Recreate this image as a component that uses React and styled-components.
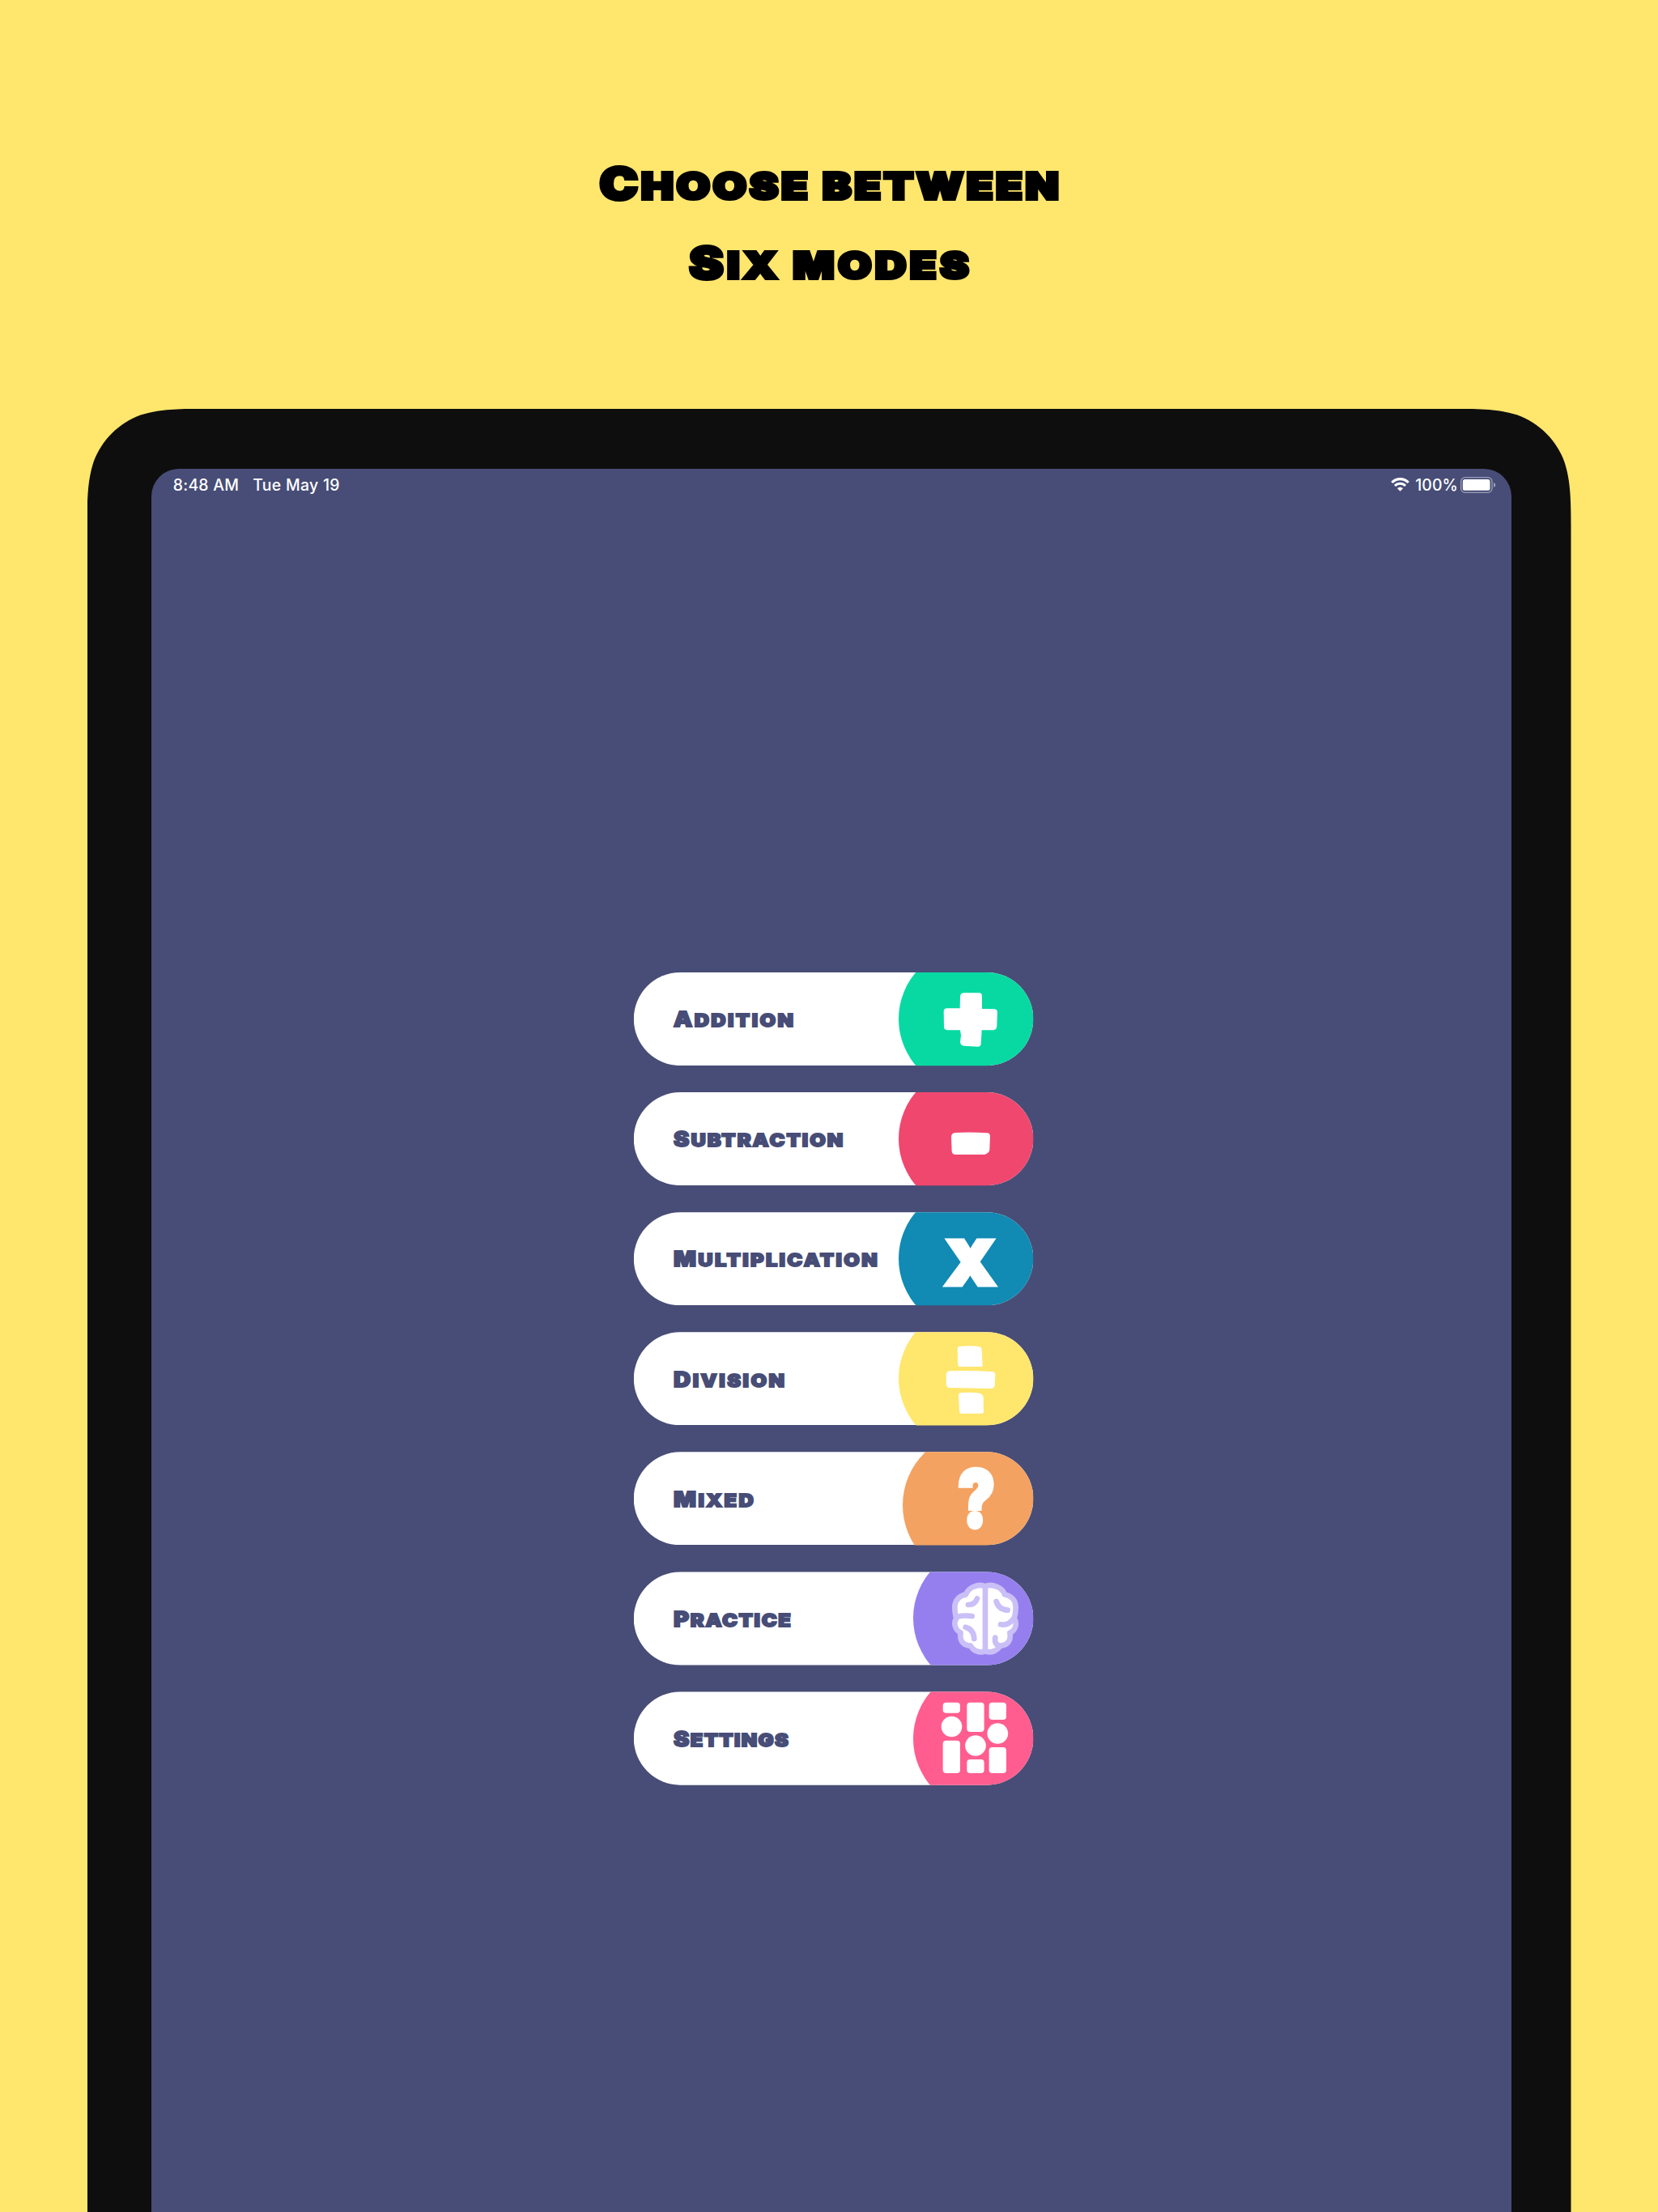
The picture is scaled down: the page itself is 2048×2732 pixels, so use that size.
import React from "react";
import styled, { createGlobalStyle } from "styled-components";

const GlobalStyle = createGlobalStyle`
  *, *::before, *::after { box-sizing: border-box; }
  html, body { margin: 0; padding: 0; background: #ffe66d; }
`;

const displayFont = `"Inter", "Liberation Sans", sans-serif`;

const Poster = styled.main`
  width: 2048px;
  height: 2732px;
  overflow: hidden;
  display: flex;
  flex-direction: column;
  align-items: center;
  background: #ffe66d;
  font-family: ${displayFont};
`;

const Headline = styled.h1`
  margin: 0;
  height: 504.7px;
  flex: none;
  padding-top: 181px;
  display: flex;
  flex-direction: column;
  align-items: center;
  color: #000;
`;

const HeadlineLine = styled.span`
  display: block;
  height: 98px;
  font-size: 45.5px;
  line-height: 98px;
  font-weight: 900;
  text-transform: uppercase;
  white-space: nowrap;
  letter-spacing: ${(p) => p.$tracking}px;
  margin-right: ${(p) => -p.$tracking}px;
  transform: scaleX(1.18);
  -webkit-text-stroke: 4px currentColor;
  &::first-letter { font-size: 54px; line-height: 1; }
`;

const Bezel = styled.section`
  width: 1833px;
  height: 2300px;
  flex: none;
  padding: 74px 73.7px 0 79.3px;
  background: #0e0e0e;
  clip-path: path("M0 2300 V160.5 C0 114.3 0 91.2 7.9 66.3 C17.8 39.1 39.1 17.8 66.3 7.9 C91.2 0 114.3 0 160.5 0 H1672.5 C1718.7 0 1741.8 0 1766.7 7.9 C1793.9 17.8 1815.2 39.1 1825.1 66.3 C1833 91.2 1833 114.3 1833 160.5 V2300 Z");
`;

const Screen = styled.div`
  height: 100%;
  border-radius: 34px 34px 0 0;
  background: #474d76;
  display: flex;
  flex-direction: column;
`;

const StatusBar = styled.header`
  height: 40px;
  flex: none;
  padding: 0 19px 0 27px;
  display: flex;
  align-items: center;
  color: #fff;
  font-size: 19.4px;
  font-weight: 450;
  line-height: 40px;
  white-space: nowrap;
`;

const Clock = styled.span`
  width: 98.5px;
  letter-spacing: 0.25px;
`;

const Today = styled.span`
  letter-spacing: 0.3px;
`;

const Indicators = styled.div`
  margin-left: auto;
  display: flex;
  align-items: center;
  svg { display: block; }
`;

const Charge = styled.span`
  width: 55.5px;
  margin-left: 7px;
`;

const Menu = styled.nav`
  padding: 582.3px 0 0 596px;
  display: flex;
  flex-direction: column;
  gap: 32.9px;
`;

const Pill = styled.button`
  appearance: none;
  border: 0;
  margin: 0;
  width: 493.6px;
  height: 115.2px;
  padding: 0 0 0 49.5px;
  clip-path: inset(0 round 57.6px);
  background: #fff;
  color: #474d76;
  font-family: inherit;
  display: flex;
  align-items: center;
  text-align: left;
`;

const Label = styled.span`
  display: block;
  flex: none;
  height: 40px;
  line-height: 40px;
  margin-top: 3.4px;
  font-size: 21.8px;
  font-weight: 900;
  text-transform: uppercase;
  white-space: nowrap;
  letter-spacing: ${(p) => p.$tracking}px;
  transform: scaleX(1.16);
  transform-origin: left center;
  -webkit-text-stroke: 1.8px currentColor;
  &::first-letter { font-size: 25.2px; line-height: 1; }
`;

const Badge = styled.span`
  flex: none;
  width: ${(p) => p.$size}px;
  height: ${(p) => p.$size}px;
  margin-left: auto;
  margin-right: ${(p) => -p.$bleed}px;
  margin-top: ${(p) => p.$drop || 0}px;
  border-radius: 50%;
  background: ${(p) => p.$color};
  color: #fff;
  display: flex;
  align-items: center;
  justify-content: center;
`;

const Icon = styled.svg`
  display: block;
  width: 96px;
  height: 96px;
  margin-left: 1px;
  overflow: visible;
`;

const Glyph = styled.span`
  display: block;
  font-size: ${(p) => p.$size}px;
  line-height: 1;
  font-weight: 900;
  -webkit-text-stroke: ${(p) => p.$stroke}px currentColor;
  transform: translateY(${(p) => p.$shift}px) scaleX(${(p) => p.$stretch});
`;

const PlusIcon = () => (
  <Icon viewBox="1143 62 288 288" fill="currentColor">
    <path d="M1260 108 L1318 108 Q1329 109 1329 119 L1329 167 L1376 168 Q1386 170 1386 180 L1384 234 Q1382 245 1371 246 L1328 246 L1325 298 Q1323 307 1314 307 L1261 304 Q1249 302 1248 290 L1251 265 L1248 246 L1200 246 Q1188 245 1188 234 L1187 176 Q1188 165 1199 165 L1247 165 L1248 122 Q1249 109 1260 108 Z" />
  </Icon>
);

const MinusIcon = () => (
  <Icon viewBox="1143 506 288 288" fill="currentColor">
    <path d="M1229 626 Q1287 623 1348 627 Q1359 628 1359 639 L1357 690 Q1355 703 1338 707 L1229 707 Q1218 706 1217 695 L1215 641 Q1216 627 1229 626 Z" />
  </Icon>
);

const DivideIcon = () => (
  <Icon viewBox="1143 525 288 288" fill="currentColor">
    <path d="M1245 549 Q1284 545 1318 549 Q1327 551 1328 561 L1331 617 Q1331 624 1325 624 L1246 624 Q1240 624 1240 617 L1238 557 Q1238 550 1245 549 Z" />
    <path d="M1208 640 Q1285 638 1367 642 Q1378 644 1378 654 L1376 694 Q1374 704 1363 705 L1208 702 Q1197 701 1196 690 L1196 653 Q1197 642 1208 640 Z" />
    <path d="M1249 721 Q1284 717 1320 722 Q1333 726 1334 738 L1335 791 Q1335 798 1328 797 L1254 798 Q1245 797 1245 789 L1242 729 Q1242 722 1249 721 Z" />
  </Icon>
);

const BrainIcon = () => (
  <Icon viewBox="1197 513 288 288">
    <path
      fill="#fff"
      stroke="#cabff7"
      strokeWidth="20"
      strokeLinejoin="round"
      d="M1341 538 C1330 532 1312 533 1296 540 C1282 546 1273 558 1269 568 C1246 571 1229 589 1228 612 C1228 630 1229 642 1234 656 C1225 670 1227 684 1234 696 C1240 705 1245 708 1250 710 C1245 738 1258 757 1287 758 C1296 776 1320 788 1341 777 C1362 788 1386 776 1396 758 C1424 757 1438 738 1432 710 C1438 708 1444 704 1449 696 C1456 684 1457 670 1448 656 C1455 638 1454 630 1454 612 C1453 589 1436 573 1413 568 C1409 556 1400 546 1386 540 C1370 533 1352 532 1341 538 Z"
    />
    <g fill="none" stroke="#cabff7" strokeWidth="20" strokeLinecap="round">
      <path d="M1341 540 V777" />
      <path d="M1278 606 Q1303 606 1311 583" />
      <path d="M1236 650 Q1262 644 1292 648" />
      <path d="M1268 689 Q1298 697 1300 732" />
      <path d="M1382 594 Q1390 623 1424 626" />
      <path d="M1398 679 Q1426 684 1444 660" />
      <path d="M1378 728 Q1374 752 1393 759" />
    </g>
  </Icon>
);

const MixerIcon = () => (
  <Icon viewBox="207 507 288 288" fill="currentColor">
    <rect x="194" y="518" width="64" height="39" rx="12" />
    <circle cx="226.500" cy="607.500" r="38.500" />
    <rect x="194" y="659" width="64" height="121" rx="12" />
    <rect x="283" y="518" width="64" height="109" rx="12" />
    <circle cx="315" cy="678" r="38.500" />
    <rect x="283" y="729" width="64" height="51" rx="12" />
    <rect x="365" y="518" width="64" height="64" rx="12" />
    <circle cx="397" cy="633" r="38.500" />
    <rect x="365" y="684" width="64" height="96" rx="12" />
  </Icon>
);

const WifiIcon = () => (
  <svg width="23" height="17" viewBox="0 0 69 51" fill="none" stroke="#fff" strokeWidth="9.500">
    <path d="M4 18 C20 0.500 49 0.500 65 18" />
    <path d="M15 30 C26 19 43 19 54 30" />
    <path d="M34.500 50 L24 40 C30 34 39 34 45 40 Z" fill="#fff" stroke="none" />
  </svg>
);

const BatteryIcon = () => (
  <svg width="44" height="20" viewBox="0 0 132 60">
    <rect x="2" y="2" width="115" height="56" rx="15" fill="none" stroke="#9da0bb" strokeWidth="4" />
    <rect x="8.500" y="9" width="101" height="41.500" rx="8" fill="#fff" />
    <path d="M123 21 Q130 24 130 30 Q130 36 123 39 Z" fill="#9da0bb" />
  </svg>
);

const modes = [
  { name: "Addition", tracking: 2.1, color: "#08d9a3", icon: <PlusIcon /> },
  { name: "Subtraction", tracking: 1.75, color: "#f0476f", icon: <MinusIcon /> },
  {
    name: "Multiplication",
    tracking: 2.05,
    color: "#118ab4",
    icon: <Glyph $size={75} $stroke={5} $shift={4.5} $stretch={1.06}>X</Glyph>,
  },
  { name: "Division", tracking: 2.2, color: "#ffe66d", icon: <DivideIcon /> },
  {
    name: "Mixed",
    tracking: 2.1,
    color: "#f4a261",
    size: 182,
    bleed: 20.6,
    drop: 16,
    icon: <Glyph $size={97} $stroke={4.5} $shift={-8.5} $stretch={0.8}>?</Glyph>,
  },
  { name: "Practice", tracking: 1.45, color: "#957fef", bleed: 29, icon: <BrainIcon /> },
  { name: "Settings", tracking: 1.15, color: "#ff5d8f", bleed: 29, icon: <MixerIcon /> },
];

export default function App() {
  return (
    <>
      <GlobalStyle />
      <Poster>
        <Headline>
          <HeadlineLine $tracking={3}>Choose between</HeadlineLine>
          <HeadlineLine $tracking={3.6}>Six modes</HeadlineLine>
        </Headline>
        <Bezel>
          <Screen>
            <StatusBar>
              <Clock>8:48 AM</Clock>
              <Today>Tue May 19</Today>
              <Indicators>
                <WifiIcon />
                <Charge>100%</Charge>
                <BatteryIcon />
              </Indicators>
            </StatusBar>
            <Menu>
              {modes.map((m) => (
                <Pill key={m.name} type="button">
                  <Label $tracking={m.tracking}>{m.name}</Label>
                  <Badge $color={m.color} $size={m.size || 177} $bleed={m.bleed || 11} $drop={m.drop}>
                    {m.icon}
                  </Badge>
                </Pill>
              ))}
            </Menu>
          </Screen>
        </Bezel>
      </Poster>
    </>
  );
}
